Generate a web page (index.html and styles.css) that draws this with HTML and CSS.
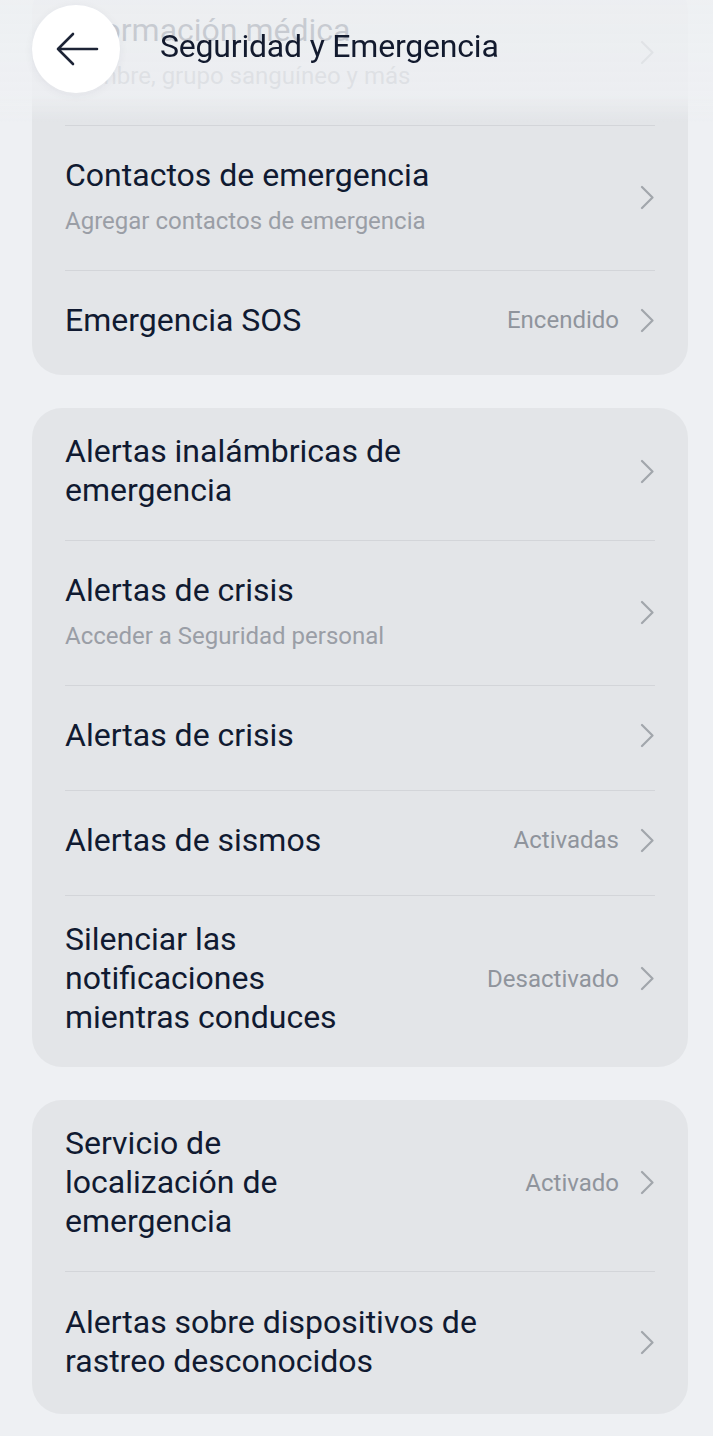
FILE: index.html
```html
<html>
<head>
    <title>Seguridad y Emergencia</title>
    <link rel="stylesheet" href="styles.css">
</head>
<body>
    <div class="topbar">
        <button class="back" type="button">
            <svg width="44" height="36" viewBox="0 0 44 36">
                <path d="M3 18 H42 M18 3 L3 18 L18 33" fill="none" stroke="#1d2436" stroke-width="2.6" stroke-linecap="round" stroke-linejoin="round"/>
            </svg>
        </button>
        <h1>Seguridad y Emergencia</h1>
    </div>

    <div class="page">
        <div class="card first">
            <div class="row has-sub">
                <div class="text">
                    <div class="title">Información médica</div>
                    <div class="sub">Nombre, grupo sanguíneo y más</div>
                </div>
                <svg class="chev" width="14" height="25" viewBox="0 0 14 25"><path d="M2 2 L12.5 12.5 L2 23"/></svg>
            </div>
            <div class="row has-sub">
                <div class="text">
                    <div class="title">Contactos de emergencia</div>
                    <div class="sub">Agregar contactos de emergencia</div>
                </div>
                <svg class="chev" width="14" height="25" viewBox="0 0 14 25"><path d="M2 2 L12.5 12.5 L2 23"/></svg>
            </div>
            <div class="row has-value">
                <div class="text">
                    <div class="title">Emergencia SOS</div>
                </div>
                <span class="value">Encendido</span>
                <svg class="chev" width="14" height="25" viewBox="0 0 14 25"><path d="M2 2 L12.5 12.5 L2 23"/></svg>
            </div>
        </div>

        <div class="card">
            <div class="row">
                <div class="text">
                    <div class="title">Alertas inalámbricas de emergencia</div>
                </div>
                <svg class="chev" width="14" height="25" viewBox="0 0 14 25"><path d="M2 2 L12.5 12.5 L2 23"/></svg>
            </div>
            <div class="row has-sub">
                <div class="text">
                    <div class="title">Alertas de crisis</div>
                    <div class="sub">Acceder a Seguridad personal</div>
                </div>
                <svg class="chev" width="14" height="25" viewBox="0 0 14 25"><path d="M2 2 L12.5 12.5 L2 23"/></svg>
            </div>
            <div class="row">
                <div class="text">
                    <div class="title">Alertas de crisis</div>
                </div>
                <svg class="chev" width="14" height="25" viewBox="0 0 14 25"><path d="M2 2 L12.5 12.5 L2 23"/></svg>
            </div>
            <div class="row has-value">
                <div class="text">
                    <div class="title">Alertas de sismos</div>
                </div>
                <span class="value">Activadas</span>
                <svg class="chev" width="14" height="25" viewBox="0 0 14 25"><path d="M2 2 L12.5 12.5 L2 23"/></svg>
            </div>
            <div class="row has-value">
                <div class="text">
                    <div class="title">Silenciar las notificaciones mientras conduces</div>
                </div>
                <span class="value">Desactivado</span>
                <svg class="chev" width="14" height="25" viewBox="0 0 14 25"><path d="M2 2 L12.5 12.5 L2 23"/></svg>
            </div>
        </div>

        <div class="card">
            <div class="row has-value">
                <div class="text">
                    <div class="title">Servicio de localización de emergencia</div>
                </div>
                <span class="value">Activado</span>
                <svg class="chev" width="14" height="25" viewBox="0 0 14 25"><path d="M2 2 L12.5 12.5 L2 23"/></svg>
            </div>
            <div class="row loose">
                <div class="text">
                    <div class="title">Alertas sobre dispositivos de rastreo desconocidos</div>
                </div>
                <svg class="chev" width="14" height="25" viewBox="0 0 14 25"><path d="M2 2 L12.5 12.5 L2 23"/></svg>
            </div>
        </div>
    </div>
</body>
</html>
```

FILE: styles.css
```css
body {
    margin: 0;
    background: #eef0f3;
    font-family: Roboto, "Noto Sans", sans-serif;
    color: #101a31;
}

/* header floats over the scrolled list */
.topbar {
    position: fixed;
    top: 0;
    left: 0;
    right: 0;
    height: 122px;
    display: flex;
    align-items: flex-start;
    padding-left: 32px;
    background: linear-gradient(to bottom,
        rgba(238, 240, 243, 0.84) 0,
        rgba(238, 240, 243, 0.8) 96px,
        rgba(238, 240, 243, 0) 122px);
    z-index: 2;
}
.back {
    width: 88px;
    height: 88px;
    margin-top: 5px;
    border: none;
    border-radius: 50%;
    background: #fff;
    box-shadow: 0 2px 10px rgba(30, 40, 60, 0.06);
    display: flex;
    align-items: center;
    justify-content: center;
    padding: 0 0 0 2px;
}
.topbar h1 {
    margin: 27px 0 0 40px;
    font-size: 32px;
    line-height: 39px;
    font-weight: 400;
    color: #121a2e;
    letter-spacing: -0.2px;
}

.page {
    margin-top: -19px;
    padding: 0 25px 22px 32px;
    display: flex;
    flex-direction: column;
    gap: 33px;
}
.card {
    background: #e3e5e8;
    border-radius: 30px;
}

.row {
    margin: 0 33px;
    min-height: 105px;
    box-sizing: border-box;
    padding: 24px 0 30px;
    display: flex;
    align-items: center;
}
.row + .row {
    border-top: 1px solid #d3d5d9;
}
.row.has-sub {
    padding: 30px 0 32px;
}
.row.loose {
    padding: 31px 0 33px;
}
.text {
    flex: 1;
}
.title {
    font-size: 32px;
    line-height: 39px;
    max-width: 460px;
}
.has-value .title {
    max-width: 300px;
}
.sub {
    margin-top: 9px;
    font-size: 24px;
    line-height: 34px;
    color: #9a9ea6;
}
.value {
    font-size: 24px;
    color: #8f949c;
    margin-right: 21px;
    white-space: nowrap;
}
.chev {
    flex: none;
    margin-right: 1px;
}
.chev path {
    fill: none;
    stroke: #a2a6ac;
    stroke-width: 2.2;
    stroke-linecap: round;
    stroke-linejoin: round;
}
```
